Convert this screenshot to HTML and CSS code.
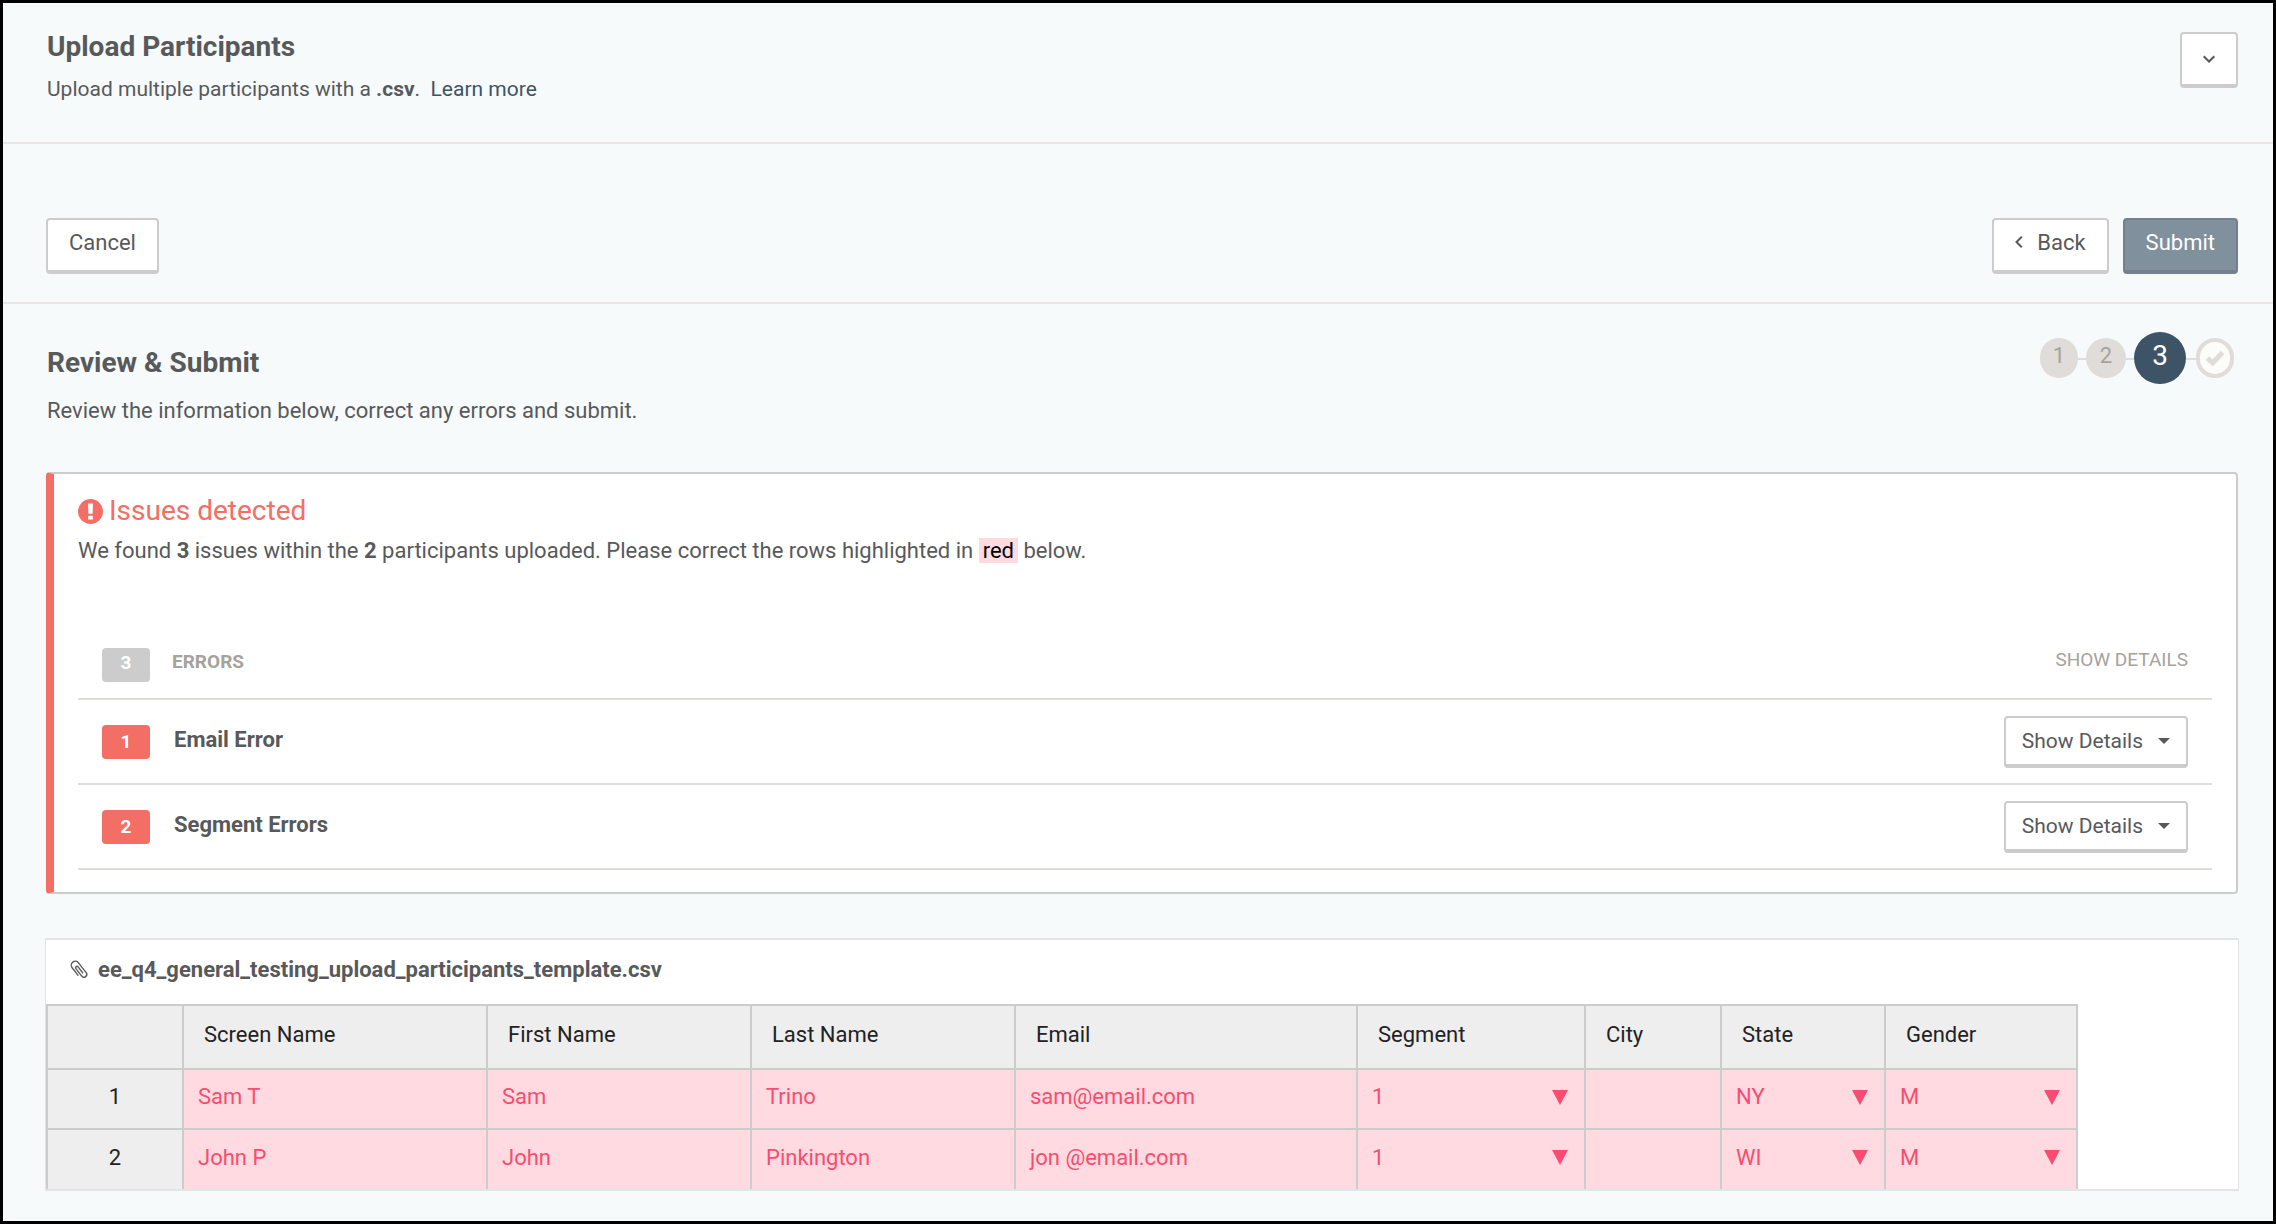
FILE: index.html
```html
<!DOCTYPE html>
<html lang="en">
<head>
<meta charset="utf-8">
<title>Upload Participants</title>
<meta name="viewport" content="width=device-width, initial-scale=1">
<link rel="stylesheet" href="styles.css">
</head>

<body>

<main class="wrap">
  <header class="hero">
    <div class="hero__main">
      <h1 class="title">Upload Participants</h1>
      <p class="hero__text">Upload multiple participants with a <b>.csv</b>.&nbsp; <a href="#learn" class="link">Learn more</a></p>
    </div>
    <button type="button" class="btn btn--toggle" aria-label="Toggle section">
      <svg class="chevron chevron--down" viewBox="0 0 12 8" aria-hidden="true"><path d="M0.7 1.2 6 6.5 11.3 1.2" /></svg>
    </button>
  </header>

  <div class="actions">
    <button type="button" class="btn">Cancel</button>
    <div class="actions__group">
      <button type="button" class="btn btn--back"><svg class="chevron chevron--left" viewBox="0 0 8 12" aria-hidden="true"><path d="M6.8 0.7 1.5 6 6.8 11.3" /></svg>Back</button>
      <button type="submit" class="btn btn--primary">Submit</button>
    </div>
  </div>

  <section class="review">
    <div class="review__head">
      <div class="review__intro">
        <h2 class="title">Review &amp; Submit</h2>
        <p class="review__text">Review the information below, correct any errors and submit.</p>
      </div>
      <ol class="steps">
        <li class="steps__item steps__item--first">1</li>
        <li class="steps__item">2</li>
        <li class="steps__item steps__item--current" aria-current="step">3</li>
        <li class="steps__item steps__item--done">
          <svg class="steps__check" viewBox="0 0 20 16" aria-hidden="true"><path d="M2.4 8.2 7.6 13 17.6 2.6" /></svg>
        </li>
      </ol>
    </div>

    <!-- issues -->
    <div class="issues">
      <h3 class="issues__title">
        <svg class="issues__icon" viewBox="0 0 24 24" aria-hidden="true"><circle cx="12" cy="12" r="12" /><path d="M9.6 4.2h4.8l-.4 10h-4zM9.8 16h4.400v3.800h-4.400z" /></svg>
        Issues detected
      </h3>
      <p class="issues__text">We found <b>3</b> issues within the <b>2</b> participants uploaded. Please correct the rows highlighted in <mark class="mark">red</mark> below.</p>

      <ul class="errors">
        <li class="errors__item errors__item--head">
          <span class="badge badge--mute">3</span>
          <strong class="errors__label">ERRORS</strong>
          <span class="errors__hint">SHOW DETAILS</span>
        </li>
        <li class="errors__item">
          <span class="badge">1</span>
          <strong class="errors__name">Email Error</strong>
          <button type="button" class="btn btn--details">Show Details<i class="caret"></i></button>
        </li>
        <li class="errors__item">
          <span class="badge">2</span>
          <strong class="errors__name">Segment Errors</strong>
          <button type="button" class="btn btn--details">Show Details<i class="caret"></i></button>
        </li>
      </ul>
    </div>

    <!-- uploaded file -->
    <div class="file">
      <h3 class="file__name">
        <svg class="file__icon" viewBox="0 0 18 20" aria-hidden="true"><path transform="rotate(-38 9 10)" d="M5 14V4a4 4 0 0 1 8 0v12.500a2.800 2.800 0 0 1-5.600 0V7a1.400 1.400 0 0 1 2.800 0v8" /></svg>
        ee_q4_general_testing_upload_participants_template.csv
      </h3>
      <table class="sheet">
        <colgroup>
          <col class="sheet__col sheet__col--index">
          <col class="sheet__col sheet__col--screen">
          <col class="sheet__col sheet__col--name">
          <col class="sheet__col sheet__col--name">
          <col class="sheet__col sheet__col--email">
          <col class="sheet__col sheet__col--segment">
          <col class="sheet__col sheet__col--city">
          <col class="sheet__col sheet__col--state">
          <col class="sheet__col sheet__col--gender">
        </colgroup>
        <thead>
          <tr>
            <td></td>
            <th scope="col">Screen Name</th>
            <th scope="col">First Name</th>
            <th scope="col">Last Name</th>
            <th scope="col">Email</th>
            <th scope="col">Segment</th>
            <th scope="col">City</th>
            <th scope="col">State</th>
            <th scope="col">Gender</th>
          </tr>
        </thead>
        <tbody>
          <tr>
            <th scope="row">1</th>
            <td>Sam T</td>
            <td>Sam</td>
            <td>Trino</td>
            <td>sam@email.com</td>
            <td><div class="pick"><select class="pick__select" aria-label="Segment, row 1"><option>1</option></select></div></td>
            <td></td>
            <td><div class="pick"><select class="pick__select" aria-label="State, row 1"><option>NY</option></select></div></td>
            <td><div class="pick"><select class="pick__select" aria-label="Gender, row 1"><option>M</option></select></div></td>
          </tr>
          <tr>
            <th scope="row">2</th>
            <td>John P</td>
            <td>John</td>
            <td>Pinkington</td>
            <td>jon @email.com</td>
            <td><div class="pick"><select class="pick__select" aria-label="Segment, row 2"><option>1</option></select></div></td>
            <td></td>
            <td><div class="pick"><select class="pick__select" aria-label="State, row 2"><option>WI</option></select></div></td>
            <td><div class="pick"><select class="pick__select" aria-label="Gender, row 2"><option>M</option></select></div></td>
          </tr>
        </tbody>
      </table>
    </div>
  </section>
</main>

</body>

</html>
```
FILE: styles.css
```css
/* reset */
body,h1,h2,h3,p,ol,ul,li,button,select,table{margin:0;padding:0}
ol,ul{list-style:none}
button,select{font-family:inherit;font-size:inherit;color:inherit;}

/* page */
html{
  --ink: #58595b;
  --navy: #3d5467;
  --line: #e8e5e3;
  --rule: #e0dcd9;
  --border: #ccc;
  --alert: #f36e64;
  --mute: #a6a29c;
  --pink: #ffdbe1;
  --rose: #fa4b70;
}
html,body{font-family:Roboto,sans-serif;font-size:22px;line-height:28px;color:var(--ink);}
body{background-color:#f6fafb;}
.wrap{min-block-size:100vh;box-sizing:border-box;border:3px solid #000;}

.title{font-size:28px;line-height:36px;font-weight:700;}
.link{color:var(--navy);text-decoration:none;}

/* buttons */
.btn{display:inline-flex;align-items:center;block-size:56px;box-sizing:border-box;padding:0 21px 6px;border:2px solid var(--border);border-block-end-width:4px;border-radius:4px;background-color:#fff;cursor:pointer;}
.btn--toggle{justify-content:center;inline-size:58px;padding:0;}
.btn--back{gap:14px;}
.btn--primary{color:#fff;background-color:#80909d;border-color:#74818c;}
.btn--details{block-size:52px;padding:0 16px;gap:15px;font-size:21px;}

.chevron{fill:none;stroke:var(--ink);stroke-width:2;}
.chevron--down{inline-size:12px;block-size:8px;}
.chevron--left{inline-size:8px;block-size:12px;}
.caret{border:6px solid transparent;border-block-start-color:var(--ink);border-block-end:0;}

/* header */
.hero{display:flex;justify-content:space-between;align-items:flex-start;padding:26px 35px 39px 44px;border-block-end:2px solid var(--line);}
.hero__text{margin-block-start:10px;font-size:21px;}
.hero .btn{margin-block-start:3px;}

.actions{display:flex;justify-content:space-between;padding:74px 35px 28px 43px;border-block-end:2px solid var(--line);}
.actions__group{display:flex;gap:14px;}

/* review */
.review{padding:28px 35px 30px 43px;}
.review__head{display:flex;justify-content:space-between;align-items:flex-start;padding-inline:1px 4px;}
.review__intro{padding-block-start:13px;}
.review__text{margin-block-start:16px;}

.steps{display:flex;align-items:center;}
.steps__item{position:relative;display:flex;align-items:center;justify-content:center;inline-size:40px;block-size:40px;box-sizing:border-box;padding-block-end:4px;border-radius:20px;background-color:var(--rule);color:var(--mute);}
.steps__item--first,.steps__item--done{inline-size:38px;}
.steps__item:nth-of-type(n+2){margin-inline-start:8px;}
.steps__item:nth-of-type(n+2)::before{position:absolute;inset-inline-end:100%;inset-block-start:50%;content:'';inline-size:10px;block-size:2px;background-color:var(--rule);}
.steps__item--current{inline-size:52px;block-size:52px;border-radius:26px;font-size:28px;color:#fff;background-color:var(--navy);}
.steps__item--done{padding:0;border:4px solid var(--rule);background-color:#fcfdf9;}
.steps__item--done:nth-of-type(n+2){margin-inline-start:10px;}
.steps__item--done:nth-of-type(n+2)::before{margin-inline-end:4px;}
.steps__check{inline-size:20px;block-size:16px;fill:none;stroke:var(--rule);stroke-width:5;}

/* issues */
.issues{margin-block-start:47px;padding:19px 24px 22px;border:2px solid var(--border);border-inline-start:8px solid var(--alert);border-radius:4px;background-color:#fff;}
.issues__title{display:flex;align-items:center;gap:6px;font-size:28px;line-height:36px;font-weight:400;color:var(--alert);}
.issues__icon{inline-size:25px;block-size:25px;fill:var(--alert);}
.issues__icon path{fill:#fff;}
.issues__text{margin-block-start:8px;}
.mark{padding-inline:4px;color:#000;background-color:var(--pink);}

.errors{margin-block-start:83px;}
.errors__item{display:flex;align-items:center;block-size:85px;padding-inline:24px;border-block-end:2px solid var(--rule);box-sizing:border-box;}
.errors__item--head{block-size:52px;align-items:flex-start;}
.badge{display:flex;align-items:center;justify-content:center;inline-size:48px;block-size:34px;box-sizing:border-box;border-radius:4px;font-size:19px;font-weight:700;color:#fff;background-color:var(--alert);}
.badge--mute{padding-block-end:4px;background-color:var(--border);}
.errors__label{margin-inline-start:22px;font-size:19px;color:var(--mute);}
.errors__name{margin-inline-start:24px;padding-block-end:4px;}
.errors__hint{margin-inline-start:auto;font-size:19px;line-height:24px;color:var(--mute);}
.errors__item .btn{margin-inline-start:auto;}

/* uploaded file */
.file{margin:44px -1px 0;border:solid #e2e5e6;border-width:2px 1px;background-color:#fff;}
.file__name{display:flex;align-items:center;gap:10px;padding:16px 24px 20px;font-size:22px;font-weight:700;}
.file__icon{inline-size:18px;block-size:20px;overflow:visible;fill:none;stroke:var(--ink);stroke-width:1.4;}

.sheet{table-layout:fixed;inline-size:2032px;border-collapse:collapse;color:#222;}
.sheet__col--index,.sheet__col--city{inline-size:136px;}
.sheet__col--screen{inline-size:304px;}
.sheet__col--name{inline-size:264px;}
.sheet__col--email{inline-size:342px;}
.sheet__col--segment{inline-size:228px;}
.sheet__col--state{inline-size:164px;}
.sheet__col--gender{inline-size:192px;}
.sheet th,.sheet td{box-sizing:border-box;border:2px solid var(--border);font-weight:400;text-align:start;}
.sheet thead th,.sheet thead td{block-size:64px;padding:0 20px 4px;background-color:#eee;}
.sheet tbody th{padding:0 0 4px;text-align:center;background-color:#eee;}
.sheet tbody td{block-size:60px;padding:0 14px 4px;color:var(--rose);background-color:var(--pink);}
.sheet tbody tr:last-child > *{border-block-end:0;}

.pick{display:flex;align-items:center;padding-inline-end:2px;}
.pick::after{content:'';border:8px solid transparent;border-block-start:15px solid var(--rose);border-block-end:0;pointer-events:none;}
.pick__select{flex:1;min-inline-size:0;block-size:28px;line-height:28px;appearance:none;border:0 none;background:none;cursor:pointer;}
```
